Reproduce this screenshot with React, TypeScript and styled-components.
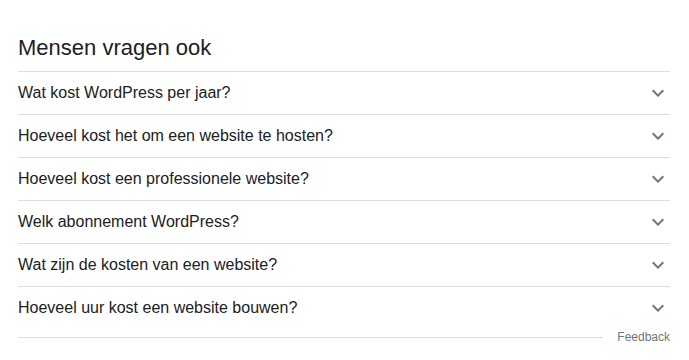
import React from "react";
import styled, { createGlobalStyle } from "styled-components";

const Global = createGlobalStyle`
  html, body { margin: 0; padding: 0; background: #fff; }
  body { font-family: "Liberation Sans", Arial, sans-serif; }
`;

const Page = styled.div`
  padding: 0 19px 0 18px;
  width: 652px;
`;

const Heading = styled.h2`
  margin: 0;
  padding-top: 35px;
  height: 36px;
  font-size: 22px;
  font-weight: 400;
  line-height: 26px;
  color: #202124;
`;

const Row = styled.div`
  display: flex;
  align-items: center;
  justify-content: space-between;
  height: 42px;
  border-top: 1px solid #dadce0;
  cursor: pointer;
`;

const Question = styled.span`
  font-size: 16px;
  line-height: 22px;
  color: #202124;
`;

const Chevron = styled.svg`
  width: 24px;
  height: 24px;
  fill: #70757a;
  flex: none;
`;

const FeedbackRow = styled.div`
  display: flex;
  align-items: center;
  gap: 14px;
  height: 16px;
`;

const Rule = styled.div`
  flex: 1;
  height: 1px;
  background: #dadce0;
`;

const FeedbackLink = styled.span`
  font-size: 12px;
  line-height: 16px;
  color: #70757a;
`;

const questions = [
  "Wat kost WordPress per jaar?",
  "Hoeveel kost het om een website te hosten?",
  "Hoeveel kost een professionele website?",
  "Welk abonnement WordPress?",
  "Wat zijn de kosten van een website?",
  "Hoeveel uur kost een website bouwen?",
];

export default function App() {
  return (
    <>
      <Global />
      <Page>
        <Heading>Mensen vragen ook</Heading>
        {questions.map((q) => (
          <Row key={q}>
            <Question>{q}</Question>
            <Chevron viewBox="0 0 24 24">
              <path d="M16.59 8.59L12 13.17 7.41 8.59 6 10l6 6 6-6z" />
            </Chevron>
          </Row>
        ))}
        <FeedbackRow>
          <Rule />
          <FeedbackLink>Feedback</FeedbackLink>
        </FeedbackRow>
      </Page>
    </>
  );
}
